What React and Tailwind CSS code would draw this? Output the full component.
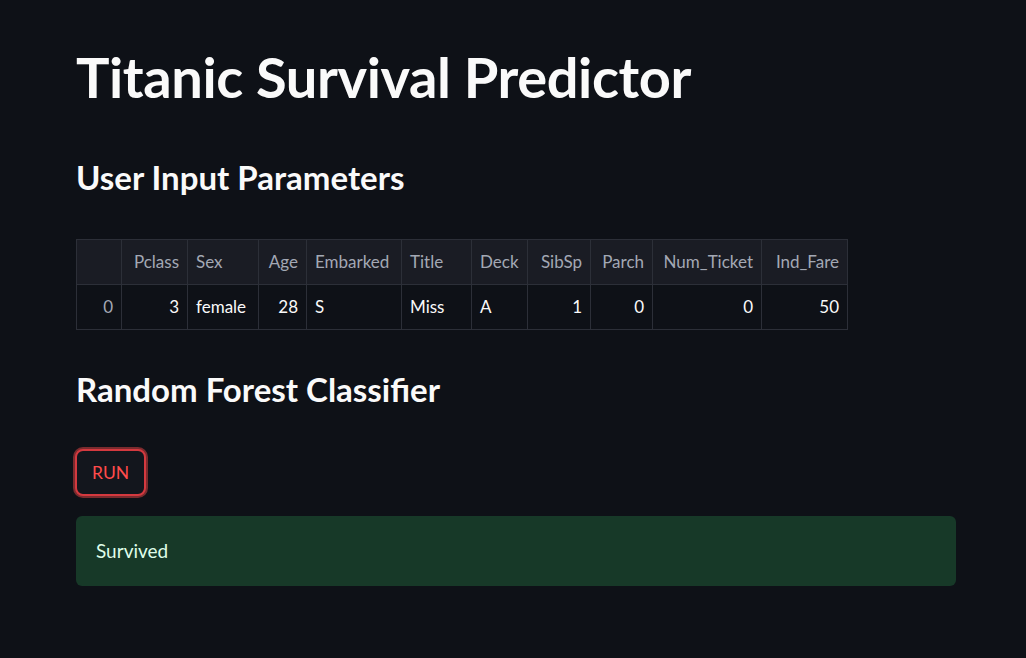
const columns = [
  { name: '', w: 45, align: 'right' },
  { name: 'Pclass', w: 66, align: 'right' },
  { name: 'Sex', w: 71, align: 'left' },
  { name: 'Age', w: 48, align: 'right' },
  { name: 'Embarked', w: 95, align: 'left' },
  { name: 'Title', w: 70, align: 'left' },
  { name: 'Deck', w: 56, align: 'left' },
  { name: 'SibSp', w: 63, align: 'right' },
  { name: 'Parch', w: 62, align: 'right' },
  { name: 'Num_Ticket', w: 109, align: 'right' },
  { name: 'Ind_Fare', w: 86, align: 'right' },
];

const row = ['0', '3', 'female', '28', 'S', 'Miss', 'A', '1', '0', '0', '50'];

export default function App() {
  return (
    <div
      className="min-h-[658px] w-full bg-[#0e1117] text-[#fafafa]"
      style={{ fontFamily: 'Lato, "Noto Sans", sans-serif' }}
    >
      <div className="flex w-[880px] flex-col pl-[76px] box-content pt-[43px]">
        <h1 className="text-[56px] font-bold leading-[1.2] tracking-[-0.4px] text-[#fafafa]">
          Titanic Survival Predictor
        </h1>

        <h2 className="mt-[48px] text-[33px] font-bold leading-[1.2] text-[#fafafa]">
          User Input Parameters
        </h2>

        {/* dataframe */}
        <table className="mt-[41px] w-max table-fixed border-collapse text-[17px]">
          <thead>
            <tr className="h-[45px] bg-[#1a1c24]">
              {columns.map((c, i) => (
                <th
                  key={i}
                  style={{ width: c.w }}
                  className={`overflow-hidden whitespace-nowrap border border-[#2c2f38] px-[8px] font-normal text-[#a3a8b4] ${
                    c.align === 'right' ? 'text-right' : 'text-left'
                  }`}
                >
                  {c.name}
                </th>
              ))}
            </tr>
          </thead>
          <tbody>
            <tr className="h-[45px]">
              {row.map((v, i) => (
                <td
                  key={i}
                  className={`border border-[#2c2f38] px-[8px] ${
                    columns[i].align === 'right' ? 'text-right' : 'text-left'
                  } ${i === 0 ? 'text-[#a3a8b4]' : 'text-[#fafafa]'}`}
                >
                  {v}
                </td>
              ))}
            </tr>
          </tbody>
        </table>

        <h2 className="mt-[40px] text-[33px] font-bold leading-[1.2] text-[#fafafa]">
          Random Forest Classifier
        </h2>

        <div className="mt-[40px]">
          <button className="-ml-[1px] h-[47px] rounded-[8px] border-2 border-[#d4393f] bg-[#13161d] px-[15px] text-[17.5px] text-[#ff4b4b] shadow-[0_0_0_2px_rgba(255,75,75,0.45)]">
            RUN
          </button>
        </div>

        <div className="mt-[20px] flex h-[70px] items-center rounded-[6px] bg-[#173928] px-[20px] text-[19px] text-[#dffde9]">
          Survived
        </div>
      </div>
    </div>
  );
}
